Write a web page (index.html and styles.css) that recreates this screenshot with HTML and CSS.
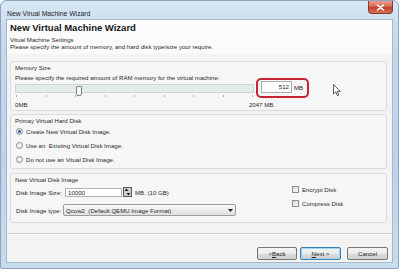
FILE: index.html
```html
<!DOCTYPE html>
<html>
<head>
<meta charset="utf-8">
<link rel="stylesheet" href="styles.css">
</head>
<body>
<div class="window">
  <div class="titlebar">
    <span class="title">New Virual Machine Wizard</span>
    <span class="close"><svg width="9" height="7" viewBox="0 0 9 7"><path d="M1.5 1 L7.5 6 M7.5 1 L1.5 6" stroke="#fff" stroke-width="1.6" stroke-linecap="round"/></svg></span>
  </div>
  <div class="client">
    <div class="header">
      <h1 class="heading">New Virtual Machine Wizard</h1>
      <p class="subtitle">Vitual Machine Settings<br>Please specify the amount of memory, and hard disk type/size your require.</p>
    </div>
    <div class="content">
      <div class="group mem">
        <div class="glabel">Memory Size</div>
        <div class="prompt">Please specify the required amount of RAM memory for the virtual machine:</div>
        <div class="memrow">
          <div class="slider">
            <div class="track"><span class="thumb"></span></div>
            <div class="ticks"><i></i><i></i><i></i><i></i><i></i><i></i><i></i><i></i><i></i></div>
          </div>
          <div class="memval">
            <span class="field">512</span><span class="unit">MB</span>
            <span class="highlight"></span>
          </div>
        </div>
        <div class="scale"><span>0MB</span><span>2047 MB.</span></div>
        <svg class="cursor" width="8" height="13" viewBox="0 0 8 13"><path d="M0.5 0.5 L0.5 10 L2.8 7.9 L4.4 11.6 L5.8 11 L4.3 7.4 L7.3 7.4 Z" fill="#fff" stroke="#333" stroke-width="0.8" stroke-linejoin="round"/></svg>
      </div>

      <div class="group primary">
        <div class="glabel">Primay Virtual Hard Disk</div>
        <div class="radio"><span class="rb checked"></span>Create New Virtual Disk Image.</div>
        <div class="radio"><span class="rb"></span>Use an&nbsp; Existing Virtual Disk Image.</div>
        <div class="radio"><span class="rb"></span>Do not use an Vitual Disk Image.</div>
      </div>

      <div class="group disk">
        <div class="glabel">New Virtual Disk Image</div>
        <div class="cols">
          <div class="left">
            <div class="row r1">
              <span class="lbl">Disk Image Size:</span>
              <span class="input">10000</span>
              <svg class="spin" width="9" height="10" viewBox="0 0 9 10"><rect x="0.5" y="0.5" width="8" height="9" fill="#cfcfcf" stroke="#5a5a5a"/><path d="M1.5 4 L3.5 1.5 L5.5 4 Z" fill="#222"/><path d="M3.5 6 L5.5 8.5 L7.5 6 Z" fill="#222"/></svg>
              <span class="after">MB. (10 GB)</span>
            </div>
            <div class="row r2">
              <span class="lbl">Disk Image type:</span>
              <span class="combo"><span>Qcow2&nbsp; (Default QEMU Image Format)</span><svg width="5" height="3" viewBox="0 0 5 3"><path d="M0 0 L5 0 L2.5 3 Z" fill="#222"/></svg></span>
            </div>
          </div>
          <div class="right">
            <div class="check c1"><span class="cb"></span>Encrypt Disk</div>
            <div class="check c2"><span class="cb"></span>Compress Disk</div>
          </div>
        </div>
      </div>
    </div>
    <div class="footer">
      <span class="btn back">&lt; <u>B</u>ack</span>
      <span class="btn next"><u>N</u>ext &gt;</span>
      <span class="btn cancel">Cancel</span>
    </div>
  </div>
</div>
</body>
</html>
```

FILE: styles.css
```css
html, body {
  margin: 0;
  padding: 0;
  background: #ffffff;
}
body {
  width: 402px;
  height: 272px;
  overflow: hidden;
  font-family: "Liberation Sans", Arial, sans-serif;
  font-size: 6.1px;
  color: #2a2a2a;
}
.window {
  box-sizing: border-box;
  width: 399px;
  height: 269px;
  border: 1px solid #8ca4bc;
  border-radius: 6px 6px 2px 2px;
  padding: 0 5px 5px 5px;
  background: linear-gradient(180deg, #d8e7f5 0%, #c6daee 12%, #bdd3ea 60%, #cadcef 100%);
  display: flex;
  flex-direction: column;
}
.titlebar {
  height: 18px;
  display: flex;
  align-items: flex-start;
}
.title {
  font-size: 6.8px;
  color: #1e1e1e;
  padding-left: 1px;
  margin-top: 9px;
}
.close {
  margin-left: auto;
  width: 25px;
  height: 13px;
  box-sizing: border-box;
  border: 1px solid #8a3a2c;
  border-top: none;
  border-radius: 0 0 4px 4px;
  background: linear-gradient(180deg, #e9a08e 0%, #d56a52 45%, #c1402a 55%, #d4705a 100%);
  display: flex;
  align-items: center;
  justify-content: center;
}
.client {
  flex: 1;
  display: flex;
  flex-direction: column;
  border: 1px solid #a6b8ca;
  background: #f3f3f3;
}
.header {
  background: #fbfbfb;
  padding: 2px 0 4px 3px;
}
.heading {
  margin: 0;
  font-size: 9.5px;
  line-height: 12px;
  font-weight: bold;
  color: #161616;
}
.subtitle {
  margin: 2px 0 0 0;
  line-height: 7px;
}
.content {
  padding: 7px 5px 0 3px;
  display: flex;
  flex-direction: column;
}
.group {
  position: relative;
  border: 1px solid #d6dce0;
  border-radius: 3px;
  padding: 2px 4px 2px 4px;
  background: #f6f6f6;
}
.glabel, .prompt {
  line-height: 7px;
}
.prompt {
  margin-top: 3px;
}
.memrow {
  display: flex;
  align-items: flex-start;
}
.slider {
  width: 239px;
  margin-top: 3px;
}
.track {
  position: relative;
  height: 9px;
  box-sizing: border-box;
  border: 1px solid #cdd6d2;
  background: #e4ece8;
}
.thumb {
  position: absolute;
  left: 60px;
  top: 1px;
  width: 4px;
  height: 8px;
  border: 1px solid #808080;
  border-radius: 1px 1px 2px 2px;
  background: #fafafa;
}
.ticks {
  display: flex;
  justify-content: space-between;
  margin-top: 2px;
  padding: 0 1px;
}
.ticks i {
  width: 1px;
  height: 2px;
  background: #b4b4b4;
}
.memval {
  position: relative;
  display: flex;
  align-items: center;
  margin-left: 7px;
}
.field {
  box-sizing: border-box;
  width: 31px;
  height: 12px;
  border: 1px solid #a9aeb4;
  background: #fff;
  text-align: right;
  padding-right: 2px;
  line-height: 10px;
}
.unit {
  margin-left: 2px;
}
.highlight {
  position: absolute;
  left: -5px;
  top: -3px;
  width: 49px;
  height: 16px;
  border: 2px solid #c52430;
  border-radius: 5px;
}
.scale {
  width: 260px;
  display: flex;
  justify-content: space-between;
  margin-top: 4px;
  line-height: 7px;
}
.cursor {
  position: absolute;
  left: 322px;
  top: 22px;
}
.primary {
  margin-top: 3px;
}
.radio {
  height: 14px;
  display: flex;
  align-items: center;
}
.rb {
  box-sizing: border-box;
  width: 7px;
  height: 7px;
  border-radius: 50%;
  border: 1px solid #8c8c8c;
  background: radial-gradient(circle, #ffffff 0%, #dedede 100%);
  margin: 0 3px 0 1px;
  display: flex;
  align-items: center;
  justify-content: center;
}
.rb.checked::after {
  content: "";
  width: 3px;
  height: 3px;
  border-radius: 50%;
  background: #2d5f98;
}
.disk {
  margin-top: 4px;
  padding-bottom: 6px;
}
.cols {
  display: flex;
}
.left {
  flex: 1;
}
.row {
  display: flex;
  align-items: center;
}
.r1 {
  margin-top: 4px;
  height: 10px;
}
.r2 {
  margin-top: 7px;
  height: 12px;
}
.lbl {
  width: 49px;
  padding-left: 1px;
}
.input {
  box-sizing: border-box;
  width: 57px;
  height: 9px;
  border: 1px solid #b0b4b8;
  background: #fff;
  line-height: 7px;
  padding-left: 2px;
}
.spin {
  margin-left: 1px;
}
.after {
  margin-left: 3px;
}
.combo {
  box-sizing: border-box;
  width: 173px;
  height: 12px;
  margin-left: -2px;
  border: 1px solid #9c9c9c;
  border-radius: 2px;
  background: linear-gradient(180deg, #fafafa 0%, #ececec 50%, #e0e0e0 100%);
  display: flex;
  align-items: center;
  justify-content: space-between;
  padding: 0 2px 0 2px;
}
.right {
  width: 90px;
}
.check {
  display: flex;
  align-items: center;
  height: 8px;
}
.c1 {
  margin-top: 2px;
}
.c2 {
  margin-top: 6px;
}
.cb {
  box-sizing: border-box;
  width: 7px;
  height: 7px;
  border: 1px solid #8e8e8e;
  background: linear-gradient(135deg, #dcdcdc, #f8f8f8);
  margin-right: 3px;
}
.footer {
  margin-top: 10px;
  border-top: 1px solid #d5d5d5;
  box-shadow: inset 0 1px 0 #ffffff;
  flex: 1;
  display: flex;
  justify-content: flex-end;
  align-items: flex-start;
  padding: 13px 4px 0 0;
}
.btn {
  box-sizing: border-box;
  height: 13px;
  width: 41px;
  border: 1px solid #767676;
  border-radius: 2px;
  background: linear-gradient(180deg, #f4f4f4 0%, #ebebeb 50%, #dddddd 51%, #cfcfcf 100%);
  display: flex;
  align-items: center;
  justify-content: center;
  color: #222;
}
.btn u {
  text-decoration: underline;
}
.back {
  width: 40px;
}
.next {
  margin-left: 3px;
  border-color: #3c7fb1;
  box-shadow: inset 0 0 0 1px #9fd5f5;
}
.cancel {
  margin-left: 6px;
}
```
